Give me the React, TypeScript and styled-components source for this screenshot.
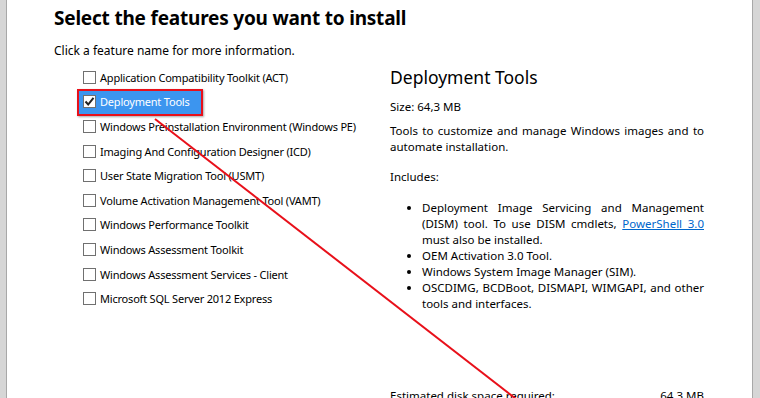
import React from "react";
import styled, { createGlobalStyle } from "styled-components";

const Global = createGlobalStyle`
  html, body { margin: 0; padding: 0; background: #fff; }
  body { font-family: "Noto Sans", "Open Sans", sans-serif; color: #000; }
`;

const Frame = styled.div`
  position: relative;
  width: 760px;
  height: 398px;
  overflow: hidden;
  display: flex;
  background: #fff;
`;

const Edge = styled.div<{ $side: "left" | "right" }>`
  flex: 0 0 ${(p) => (p.$side === "left" ? "7px" : "8px")};
  background: #d6d6d6;
  ${(p) =>
    p.$side === "left"
      ? "border-right: 1px solid #a8a8a8;"
      : "border-left: 1px solid #a8a8a8;"}
  box-sizing: border-box;
`;

const Content = styled.div`
  flex: 1;
  padding: 4px 0 0 47px;
  display: flex;
  flex-direction: column;
`;

const Title = styled.h1`
  margin: 0;
  font-size: 19px;
  font-weight: 700;
  line-height: 28px;
  letter-spacing: -0.2px;
`;

const Subtitle = styled.p`
  margin: 11px 0 0;
  font-size: 12px;
  line-height: 16px;
`;

const Columns = styled.div`
  display: grid;
  grid-template-columns: 336px 314px;
  margin-top: 6px;
`;

const List = styled.ul`
  list-style: none;
  margin: 0;
  padding: 0 0 0 29px;
  display: flex;
  flex-direction: column;
`;

const Row = styled.li<{ $selected?: boolean }>`
  height: 24.6px;
  display: flex;
  align-items: center;
  position: relative;
  font-size: 11px;
  letter-spacing: -0.2px;
  color: ${(p) => (p.$selected ? "#fff" : "#000")};
  &::before {
    content: "";
    display: ${(p) => (p.$selected ? "block" : "none")};
    position: absolute;
    left: -6px;
    top: -1px;
    width: 126px;
    height: 27px;
    box-sizing: border-box;
    background: #3c95ef;
    border: 2px solid #e8101a;
    box-shadow: 1px 1px 2px rgba(0, 0, 0, 0.35);
  }
`;

const Box = styled.span`
  position: relative;
  flex: 0 0 13px;
  width: 13px;
  height: 13px;
  box-sizing: border-box;
  border: 1px solid #707070;
  background: #fff;
  margin-right: 4px;
  display: flex;
  align-items: center;
  justify-content: center;
`;

const Label = styled.span`
  position: relative;
  white-space: nowrap;
`;

const Details = styled.div`
  display: flex;
  flex-direction: column;
  font-size: 11.5px;
  line-height: 16px;
`;

const DetailTitle = styled.h2`
  margin: 0;
  font-size: 17.5px;
  font-weight: 400;
  line-height: 24px;
`;

const Para = styled.p<{ $top: number }>`
  margin: ${(p) => p.$top}px 0 0;
  text-align: justify;
`;

const Bullets = styled.ul`
  margin: 15px 0 0;
  padding: 0 0 0 32px;
  text-align: justify;
`;

const Link = styled.a`
  color: #0066cc;
  text-decoration: underline;
`;

const Estimate = styled.div`
  margin-top: 76px;
  display: flex;
  justify-content: space-between;
`;

const Overlay = styled.svg`
  position: absolute;
  left: 0;
  top: 0;
  pointer-events: none;
`;

const items = [
  "Application Compatibility Toolkit (ACT)",
  "Deployment Tools",
  "Windows Preinstallation Environment (Windows PE)",
  "Imaging And Configuration Designer (ICD)",
  "User State Migration Tool (USMT)",
  "Volume Activation Management Tool (VAMT)",
  "Windows Performance Toolkit",
  "Windows Assessment Toolkit",
  "Windows Assessment Services - Client",
  "Microsoft SQL Server 2012 Express",
];

export default function App() {
  return (
    <>
      <Global />
      <Frame>
        <Edge $side="left" />
        <Content>
          <Title>Select the features you want to install</Title>
          <Subtitle>Click a feature name for more information.</Subtitle>
          <Columns>
            <List>
              {items.map((t, i) => (
                <Row key={t} $selected={i === 1}>
                  <Box>
                    {i === 1 && (
                      <svg width="11" height="11" viewBox="0 0 11 11">
                        <path d="M1.5 5.5 L4.2 8.5 L9.5 1.8" fill="none" stroke="#222" strokeWidth="2" />
                      </svg>
                    )}
                  </Box>
                  <Label>{t}</Label>
                </Row>
              ))}
            </List>
            <Details>
              <DetailTitle>Deployment Tools</DetailTitle>
              <Para $top={10}>Size: 64,3 MB</Para>
              <Para $top={8}>
                Tools to customize and manage Windows images and to automate installation.
              </Para>
              <Para $top={14}>Includes:</Para>
              <Bullets>
                <li>
                  Deployment Image Servicing and Management (DISM) tool. To use DISM cmdlets,{" "}
                  <Link href="#">PowerShell 3.0</Link> must also be installed.
                </li>
                <li>OEM Activation 3.0 Tool.</li>
                <li>Windows System Image Manager (SIM).</li>
                <li>OSCDIMG, BCDBoot, DISMAPI, WIMGAPI, and other tools and interfaces.</li>
              </Bullets>
              <Estimate>
                <span>Estimated disk space required:</span>
                <span>64,3 MB</span>
              </Estimate>
            </Details>
          </Columns>
        </Content>
        <Edge $side="right" />
        <Overlay width="760" height="398" viewBox="0 0 760 398">
          <line x1="155" y1="119" x2="520" y2="402" stroke="#e8101a" strokeWidth="2" />
        </Overlay>
      </Frame>
    </>
  );
}
